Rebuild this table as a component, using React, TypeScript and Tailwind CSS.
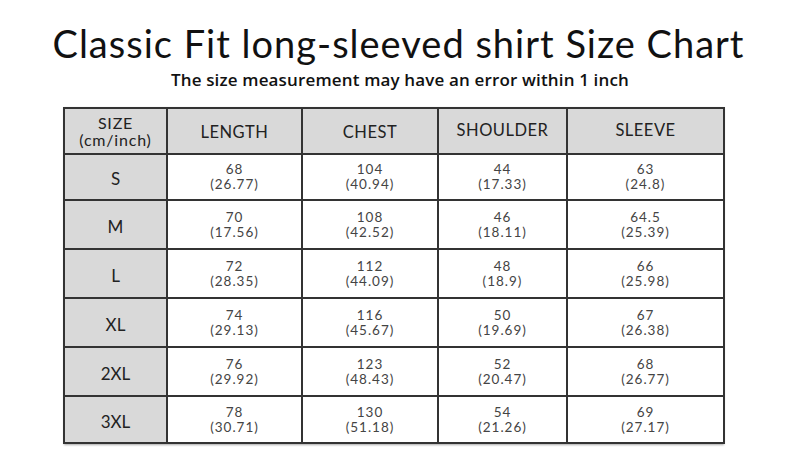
import React from "react";

const rows = [
  ["S", ["68", "26.77"], ["104", "40.94"], ["44", "17.33"], ["63", "24.8"]],
  ["M", ["70", "17.56"], ["108", "42.52"], ["46", "18.11"], ["64.5", "25.39"]],
  ["L", ["72", "28.35"], ["112", "44.09"], ["48", "18.9"], ["66", "25.98"]],
  ["XL", ["74", "29.13"], ["116", "45.67"], ["50", "19.69"], ["67", "26.38"]],
  ["2XL", ["76", "29.92"], ["123", "48.43"], ["52", "20.47"], ["68", "26.77"]],
  ["3XL", ["78", "30.71"], ["130", "51.18"], ["54", "21.26"], ["69", "27.17"]],
] as const;

const heights = ["h-[46px]", "h-[49px]", "h-[49px]", "h-[49px]", "h-[49px]", "h-[47px]"];

export default function App() {
  return (
    <div className="w-[800px] h-[460px] bg-white overflow-hidden">
      <div className="flex flex-col items-center pt-[21px]">
        <h1 className="text-[38px] leading-[44px] text-[#111] font-['Lato',sans-serif] tracking-[1px] ml-[-3px]">
          Classic Fit long-sleeved shirt Size Chart
        </h1>
        <p className="mt-[4px] text-[17px] leading-[22px] font-semibold text-[#111] font-['Open_Sans',sans-serif] tracking-[0.15px]">
          The size measurement may have an error within 1 inch
        </p>
      </div>
      <div className="ml-[63px] mt-[16px] w-[660px] font-['Lato',sans-serif] shadow-[1px_1px_2px_rgba(0,0,0,0.35)]">
        <table className="border-collapse border-2 border-[#333] w-[660px] table-fixed">
          <colgroup>
            <col className="w-[103px]" />
            <col className="w-[135px]" />
            <col className="w-[136px]" />
            <col className="w-[129px]" />
            <col className="w-[157px]" />
          </colgroup>
          <thead>
            <tr className="h-[46px] bg-[#d9d9d9] text-[#222]">
              <th className="border-2 border-[#333] font-normal text-[16px] leading-[17px] tracking-[0.8px]">
                <div>SIZE</div>
                <div>(cm/inch)</div>
              </th>
              <th className="border-2 border-[#333] font-normal text-[16.5px] tracking-[0.5px] pt-[2px]">LENGTH</th>
              <th className="border-2 border-[#333] font-normal text-[16.5px] tracking-[0.5px] pt-[2px]">CHEST</th>
              <th className="border-2 border-[#333] font-normal text-[16.5px] tracking-[0.5px] pb-[2px]">SHOULDER</th>
              <th className="border-2 border-[#333] font-normal text-[16.5px] tracking-[0.5px] pb-[2px]">SLEEVE</th>
            </tr>
          </thead>
          <tbody>
            {rows.map((r, i) => (
              <tr key={r[0]} className={heights[i]}>
                <td className="border-2 border-[#333] bg-[#d9d9d9] text-center text-[17px] text-[#222] pt-[4px]">
                  {r[0]}
                </td>
                {r.slice(1).map((c, j) => {
                  const v = c as readonly [string, string];
                  return (
                    <td
                      key={j}
                      className="border-2 border-[#333] bg-white text-center text-[13.5px] leading-[15px] text-[#444] tracking-[1px]"
                    >
                      {v[0]}
                      <br />({v[1]})
                    </td>
                  );
                })}
              </tr>
            ))}
          </tbody>
        </table>
      </div>
    </div>
  );
}
